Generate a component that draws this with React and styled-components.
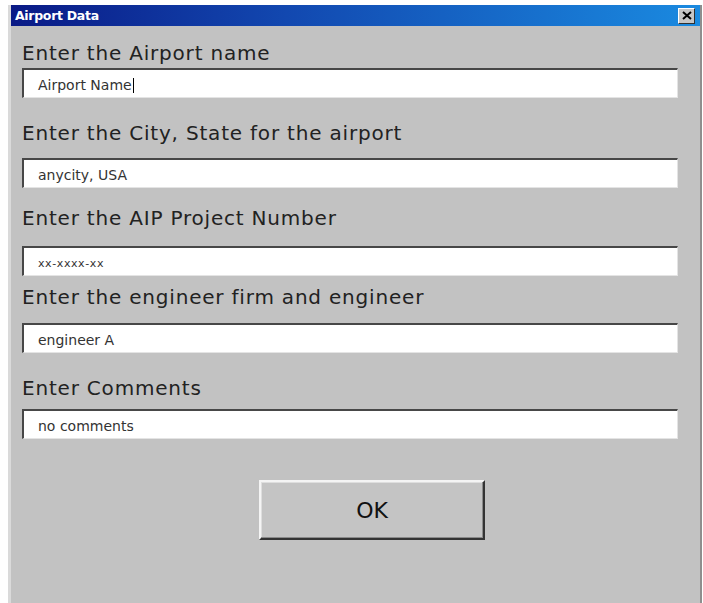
import React from 'react'
import styled, { createGlobalStyle } from 'styled-components'

const Global = createGlobalStyle`
  html, body {
    margin: 0;
    padding: 0;
    background: #ffffff;
  }
`

const Window = styled.div`
  margin: 5px 1px 0 8px;
  height: 598px;
  background: #c2c2c2;
  border-left: 3px solid #dadada;
  border-right: 2px solid #8e8e8e;
  box-sizing: border-box;
  display: flex;
  flex-direction: column;
`

const TitleBar = styled.div`
  height: 21px;
  flex-shrink: 0;
  background: linear-gradient(to right, #0a1a86 0%, #1248b0 40%, #1a8ae0 100%);
  display: flex;
  align-items: center;
  justify-content: space-between;
  padding: 0 5px 0 4px;
`

const Title = styled.span`
  color: #ffffff;
  font-family: Tahoma, "DejaVu Sans", sans-serif;
  font-weight: bold;
  font-size: 12.5px;
  letter-spacing: -0.3px;
`

const CloseBtn = styled.div`
  width: 17px;
  height: 16px;
  background: #c6c6c6;
  border: 1px solid;
  border-color: #ffffff #303030 #303030 #ffffff;
  box-sizing: border-box;
  display: flex;
  align-items: center;
  justify-content: center;
`

const Body = styled.div`
  flex: 1;
  padding: 15px 22px 0 11px;
  display: flex;
  flex-direction: column;
`

const Label = styled.div`
  font-family: "DejaVu Sans", Verdana, sans-serif;
  font-size: 20px;
  letter-spacing: 0.8px;
  color: #222222;
  height: 24px;
  line-height: 24px;
  margin-top: ${p => p.mt}px;
`

const Input = styled.div`
  height: 30px;
  margin-top: ${p => p.mt}px;
  background: #ffffff;
  border-top: 2px solid #474747;
  border-left: 2px solid #474747;
  border-right: 1px solid #e4e4e4;
  border-bottom: 1px solid #e4e4e4;
  box-sizing: border-box;
  padding: 3px 0 0 14px;
  display: flex;
  align-items: center;
  font-family: Tahoma, "DejaVu Sans", sans-serif;
  font-size: ${p => (p.small ? 11 : 14)}px;
  letter-spacing: ${p => (p.small ? 0.6 : 0)}px;
  color: #333333;
`

const Caret = styled.span`
  display: inline-block;
  width: 1px;
  height: 15px;
  background: #000;
  margin-left: 1px;
`

const ButtonRow = styled.div`
  display: flex;
  justify-content: center;
  margin-top: 41px;
  padding-left: 44px;
`

const OkButton = styled.button`
  width: 226px;
  height: 60px;
  background: #c4c4c4;
  border: 2px solid;
  border-color: #f4f4f4 #333333 #333333 #f4f4f4;
  box-shadow: inset -1px -1px 0 #8a8a8a, inset 1px 1px 0 #dedede;
  font-family: "DejaVu Sans", Verdana, sans-serif;
  font-size: 22px;
  color: #111111;
  padding: 0;
`

const fields = [
  { label: 'Enter the Airport name', value: 'Airport Name', caret: true, lm: 0, im: 3 },
  { label: 'Enter the City, State for the airport', value: 'anycity, USA', lm: 23, im: 13 },
  { label: 'Enter the AIP Project Number', value: 'xx-xxxx-xx', small: true, lm: 18, im: 16 },
  { label: 'Enter the engineer firm and engineer', value: 'engineer A', lm: 9, im: 14 },
  { label: 'Enter Comments', value: 'no comments', lm: 23, im: 9 },
]

export default function App() {
  return (
    <>
      <Global />
      <Window>
        <TitleBar>
          <Title>Airport Data</Title>
          <CloseBtn>
            <svg width="10" height="9" viewBox="0 0 10 9">
              <path d="M1 1 L9 8 M9 1 L1 8" stroke="#000" strokeWidth="2" />
            </svg>
          </CloseBtn>
        </TitleBar>
        <Body>
          {fields.map(f => (
            <React.Fragment key={f.label}>
              <Label mt={f.lm}>{f.label}</Label>
              <Input mt={f.im} small={f.small}>
                {f.value}
                {f.caret && <Caret />}
              </Input>
            </React.Fragment>
          ))}
          <ButtonRow>
            <OkButton>OK</OkButton>
          </ButtonRow>
        </Body>
      </Window>
    </>
  )
}
